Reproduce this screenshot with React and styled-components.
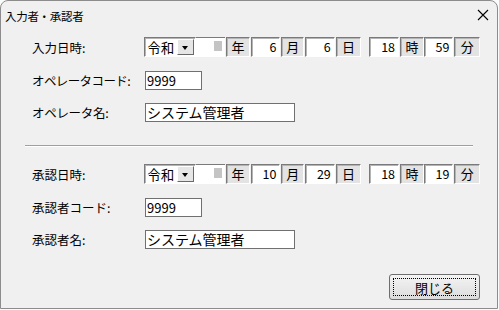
import React from "react";
import styled, { createGlobalStyle } from "styled-components";

const GlobalStyle = createGlobalStyle`
  html, body {
    margin: 0;
    padding: 0;
    background: #fbfbfb;
  }
  body {
    font-family: "Noto Sans CJK JP", "Liberation Sans", sans-serif;
    color: #000;
  }
`;

const sunken = `
  box-sizing: border-box;
  border-style: solid;
  border-width: 1px;
  border-color: #7a7a7a #ffffff #ffffff #7a7a7a;
  box-shadow: inset 1px 1px 0 #b4b4b4;
`;

const Window = styled.div`
  box-sizing: border-box;
  width: 498px;
  height: 309px;
  background: #f0f0f0;
  border: 1px solid #8c8c8c;
  border-radius: 8px 8px 0 0;
  display: flex;
  flex-direction: column;
`;

const TitleBar = styled.div`
  height: 29px;
  display: flex;
  align-items: center;
  justify-content: space-between;
  padding: 0 8px 0 4px;
  font-size: 11.5px;
  letter-spacing: -0.3px;
`;

const CloseIcon = styled.svg`
  width: 12px;
  height: 12px;
  margin-top: -2px;
`;

const Body = styled.div`
  display: flex;
  flex-direction: column;
  padding: 7px 17px 0 31px;
`;

const Row = styled.div`
  display: flex;
  align-items: center;
  height: ${(p) => p.h || 19}px;
  margin-top: ${(p) => p.mt || 0}px;
`;

const Label = styled.div`
  width: 114px;
  font-size: 12.5px;
  letter-spacing: ${(p) => p.ls || 0}px;
  white-space: nowrap;
`;

const Combo = styled.div`
  ${sunken};
  width: 52px;
  height: 20px;
  background: #fff;
  display: flex;
  align-items: center;
  justify-content: space-between;
  padding: 0 1px 0 2px;
  font-size: 13.5px;
`;

const DropButton = styled.div`
  box-sizing: border-box;
  width: 17px;
  height: 16px;
  background: #e6e6e6;
  border-style: solid;
  border-width: 1px;
  border-color: #ffffff #696969 #696969 #ffffff;
  display: flex;
  align-items: center;
  justify-content: center;
`;

const Triangle = styled.div`
  width: 0;
  height: 0;
  border-left: 3.5px solid transparent;
  border-right: 3.5px solid transparent;
  border-top: 4px solid #000;
  margin-top: 1px;
`;

const EraYear = styled.div`
  box-sizing: border-box;
  width: 30px;
  height: 20px;
  background: #fff;
  border-top: 1px solid #7a7a7a;
  display: flex;
  align-items: flex-start;
  justify-content: flex-end;
  padding: 3px 3px 0 0;
`;

const ScrollBlock = styled.div`
  width: 8px;
  height: 10px;
  background: #c4c4c4;
`;

const NumBox = styled.div`
  ${sunken};
  width: ${(p) => p.w || 30}px;
  height: 20px;
  margin-left: ${(p) => p.ml || 0}px;
  background: #fff;
  font-size: 12.5px;
  text-align: right;
  padding-right: 3px;
  line-height: 18px;
`;

const UnitBox = styled.div`
  ${sunken};
  width: ${(p) => p.w || 24}px;
  height: 20px;
  margin-left: 1px;
  background: #e3e3e3;
  font-size: 13px;
  line-height: 18px;
  text-align: center;
`;

const TextInput = styled.div`
  box-sizing: border-box;
  width: ${(p) => p.w}px;
  height: 19px;
  background: #fff;
  border: 1px solid #707070;
  font-size: ${(p) => p.fs || 13}px;
  line-height: 17px;
  padding-left: 1px;
  margin-left: -1px;
  white-space: nowrap;
`;

const Separator = styled.div`
  height: 1px;
  width: 448px;
  margin: 23px 0 0 -7px;
  background: #a0a0a0;
  box-shadow: 0 1px 0 #ffffff;
`;

const Footer = styled.div`
  display: flex;
  justify-content: flex-end;
  margin-top: 25px;
`;

const CloseButton = styled.button`
  box-sizing: border-box;
  width: 91px;
  height: 26px;
  padding: 3px;
  border: 1px solid #6e6e6e;
  border-radius: 3px;
  background: linear-gradient(#f4f4f4, #dcdcdc);
  font-family: "Noto Sans CJK JP", "Liberation Sans", sans-serif;
  font-size: 13px;
  color: #000;
`;

const Focus = styled.div`
  box-sizing: border-box;
  height: 100%;
  border: 1px dotted #000;
  display: flex;
  align-items: center;
  justify-content: center;
`;

const DateTimeRow = ({ m, d, hh, mm }) => (
  <>
    <Combo>
      令和
      <DropButton>
        <Triangle />
      </DropButton>
    </Combo>
    <EraYear>
      <ScrollBlock />
    </EraYear>
    <UnitBox>年</UnitBox>
    <NumBox ml={1}>{m}</NumBox>
    <UnitBox w={23}>月</UnitBox>
    <NumBox ml={1}>{d}</NumBox>
    <UnitBox w={26}>日</UnitBox>
    <NumBox ml={8}>{hh}</NumBox>
    <UnitBox>時</UnitBox>
    <NumBox>{mm}</NumBox>
    <UnitBox w={26}>分</UnitBox>
  </>
);

export default function App() {
  return (
    <>
      <GlobalStyle />
      <Window>
        <TitleBar>
          <span>入力者・承認者</span>
          <CloseIcon viewBox="0 0 12 12">
            <path d="M1 1 L11 11 M11 1 L1 11" stroke="#000" strokeWidth="1.1" />
          </CloseIcon>
        </TitleBar>
        <Body>
          <Row h={20}>
            <Label>入力日時:</Label>
            <DateTimeRow m="6" d="6" hh="18" mm="59" />
          </Row>
          <Row mt={14}>
            <Label ls={-0.6}>オペレータコード:</Label>
            <TextInput w={57}>9999</TextInput>
          </Row>
          <Row mt={13}>
            <Label ls={-0.3}>オペレータ名:</Label>
            <TextInput w={150} fs={14}>システム管理者</TextInput>
          </Row>
          <Separator />
          <Row h={20} mt={18}>
            <Label>承認日時:</Label>
            <DateTimeRow m="10" d="29" hh="18" mm="19" />
          </Row>
          <Row mt={14}>
            <Label>承認者コード:</Label>
            <TextInput w={57}>9999</TextInput>
          </Row>
          <Row mt={13}>
            <Label>承認者名:</Label>
            <TextInput w={150} fs={14}>システム管理者</TextInput>
          </Row>
          <Footer>
            <CloseButton>
              <Focus>閉じる</Focus>
            </CloseButton>
          </Footer>
        </Body>
      </Window>
    </>
  );
}
